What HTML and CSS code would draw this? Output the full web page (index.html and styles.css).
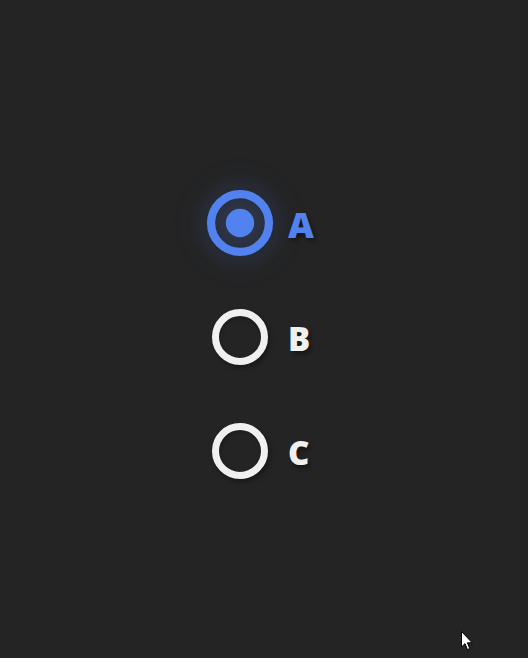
FILE: index.html
```html
<!DOCTYPE html>
<html>
<head>
<meta charset="utf-8">
<link rel="stylesheet" href="styles.css">
</head>
<body>
<div class="page">
  <div class="group">
    <label class="option checked">
      <span class="radio"><span class="dot"></span></span>
      <span class="label">A</span>
    </label>
    <label class="option">
      <span class="radio"><span class="dot"></span></span>
      <span class="label">B</span>
    </label>
    <label class="option">
      <span class="radio"><span class="dot"></span></span>
      <span class="label">C</span>
    </label>
  </div>
  <svg class="cursor" width="13" height="20" viewBox="0 0 13 20">
    <path d="M0.5 0.5 L0.5 16 L4 12.6 L6.5 18.6 L8.8 17.6 L6.4 11.8 L11.2 11.8 Z" fill="#fff" stroke="#000" stroke-width="1"/>
  </svg>
</div>
</body>
</html>
```
FILE: styles.css
```css
html, body {
  margin: 0;
  padding: 0;
  background: #242424;
}
.page {
  position: relative;
  width: 528px;
  height: 658px;
  overflow: hidden;
}
.group {
  display: flex;
  flex-direction: column;
  gap: 58px;
  padding-top: 195px;
  padding-left: 212px;
}
.option {
  display: flex;
  align-items: center;
  gap: 20px;
  height: 56px;
  font-family: "Open Sans", "DejaVu Sans", sans-serif;
  font-weight: 800;
}
.radio {
  box-sizing: border-box;
  width: 56px;
  height: 56px;
  border-radius: 50%;
  border: 7px solid #f0f0f0;
  display: flex;
  align-items: center;
  justify-content: center;
  box-shadow: 2px 3px 5px rgba(0, 0, 0, 0.35), inset 1px 2px 4px rgba(0, 0, 0, 0.25);
  flex: none;
}
.dot {
  width: 24px;
  height: 24px;
  border-radius: 50%;
  background: transparent;
}
.label {
  font-size: 33px;
  color: #f0f0f0;
  padding-top: 2px;
  text-shadow: 2px 3px 4px rgba(0, 0, 0, 0.4);
}
.checked .radio {
  border-color: #5282f0;
  transform: scale(1.18);
  background: radial-gradient(circle, rgba(82, 130, 240, 0.25) 0%, rgba(82, 130, 240, 0.12) 70%);
  box-shadow: 0 0 12px 8px rgba(82, 130, 240, 0.07), 0 0 24px 14px rgba(82, 130, 240, 0.04);
}
.checked .dot {
  background: #5282f0;
}
.checked .label {
  color: #5282f0;
  transform: scale(1.08);
  transform-origin: left center;
}
.cursor {
  position: absolute;
  left: 461px;
  top: 631px;
}
```
